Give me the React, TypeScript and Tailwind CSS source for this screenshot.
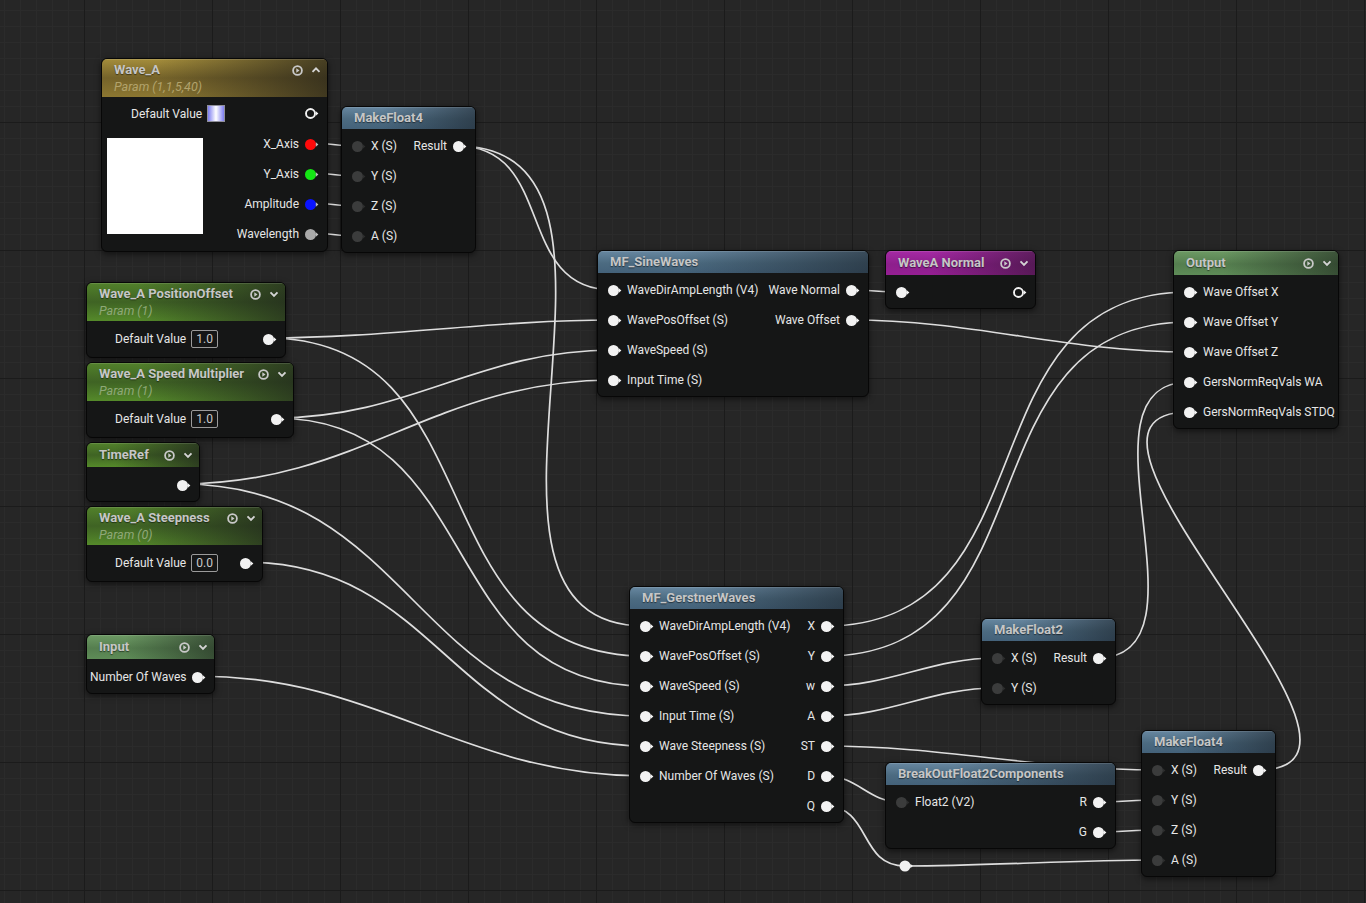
import React from "react";

type Variant = "gold" | "param" | "func" | "purple" | "output";

const headerBg: Record<Variant, string> = {
  gold: "bg-[linear-gradient(to_right,transparent_25%,rgba(32,30,24,0.7)_100%),linear-gradient(to_bottom,#a48d3b_0%,#75632a_50%,#8c7731_100%)]",
  param:
    "bg-[linear-gradient(to_right,transparent_25%,rgba(30,34,28,0.7)_100%),linear-gradient(to_bottom,#52812b_0%,#3f6324_50%,#558a2a_100%)]",
  func: "bg-[linear-gradient(to_right,transparent_30%,rgba(28,36,44,0.6)_100%),linear-gradient(to_bottom,#6787a0_0%,#4c6b81_55%,#44627a_100%)]",
  purple:
    "bg-[linear-gradient(to_right,transparent_30%,rgba(40,20,40,0.55)_100%),linear-gradient(to_bottom,#a62aa5_0%,#8d1f8c_55%,#951f93_100%)]",
  output:
    "bg-[linear-gradient(to_right,transparent_30%,rgba(30,38,30,0.6)_100%),linear-gradient(to_bottom,#6d9a64_0%,#557e4f_55%,#5e8c57_100%)]",
};

const subColor: Record<Variant, string> = {
  gold: "text-[#b2a36c]",
  param: "text-[#8fa878]",
  func: "text-[#9ab0c0]",
  purple: "text-[#d09ad0]",
  output: "text-[#a9c0a4]",
};

// pin glyph: circle + little arrow nub
const Pin = ({
  color = "#f2f2f2",
  arrow = "#f2f2f2",
  ring = false,
}: {
  color?: string;
  arrow?: string;
  ring?: boolean;
}) => (
  <svg width="15" height="11" viewBox="0 0 15 11" className="shrink-0">
    {ring ? (
      <circle cx="5.5" cy="5.5" r="4.5" fill="none" stroke={color} strokeWidth="1.9" />
    ) : (
      <circle cx="5.5" cy="5.5" r="5.5" fill={color} />
    )}
    <path d="M10.8 3.2 L13.4 5.5 L10.8 7.8 Z" fill={arrow} />
  </svg>
);

const DarkPin = () => <Pin color="#3b3c3c" arrow="#2c2d2d" />;

const HeaderIcons = ({ up = false }: { up?: boolean }) => (
  <div className="flex items-center gap-[8px]">
    <svg width="11" height="11" viewBox="0 0 11 11">
      <circle cx="5.5" cy="5.5" r="4.4" fill="none" stroke="#c9c9c9" strokeWidth="1.8" />
      <path d="M4.3 3.3 L7.5 5.5 L4.3 7.7 Z" fill="#c9c9c9" />
    </svg>
    <svg width="10" height="10" viewBox="0 0 10 10">
      <path
        d={up ? "M1.5 6.8 L5 3.3 L8.5 6.8" : "M1.5 3.4 L5 6.9 L8.5 3.4"}
        fill="none"
        stroke="#d4d4d4"
        strokeWidth="1.9"
      />
    </svg>
  </div>
);

type NodeProps = {
  className: string;
  variant: Variant;
  title: string;
  sub?: string;
  icons?: "up" | "down";
  head?: string;
  bodyClass?: string;
  children: React.ReactNode;
};

const Node = ({ className, variant, title, sub, icons, head = "h-[22px]", bodyClass = "pt-[2px] pb-px", children }: NodeProps) => (
  <div
    className={`absolute overflow-hidden rounded-[6px] border border-[#070707] bg-[#151616] shadow-[0_2px_6px_rgba(0,0,0,0.55)] ${className}`}
  >
    <div className={`${headerBg[variant]} shadow-[inset_0_1px_0_rgba(255,255,255,0.12)]`}>
      <div className={`flex ${head} items-center justify-between pl-3 pr-[6px]`}>
        <span className="text-[13px] font-bold text-[#c6c6c6] [text-shadow:0_1px_1px_rgba(0,0,0,0.5)]">{title}</span>
        {icons && <HeaderIcons up={icons === "up"} />}
      </div>
      {sub && (
        <div className={`-mt-[2px] pb-[2px] pl-3 text-[12.5px] italic leading-[16px] ${subColor[variant]}`}>{sub}</div>
      )}
    </div>
    <div className={bodyClass}>{children}</div>
  </div>
);

const In = ({ label, dark = false }: { label: string; dark?: boolean }) => (
  <div className="flex items-center pl-[10px]">
    {dark ? <DarkPin /> : <Pin />}
    <span className="ml-[4px] whitespace-nowrap">{label}</span>
  </div>
);

const Out = ({ label, color, arrow, ring }: { label?: string; color?: string; arrow?: string; ring?: boolean }) => (
  <div className="flex items-center pr-[7px]">
    {label && <span className="mr-[6px] whitespace-nowrap">{label}</span>}
    <Pin color={color} arrow={arrow} ring={ring} />
  </div>
);

const Row = ({ children }: { children: React.ReactNode }) => (
  <div className="flex h-[30px] items-center justify-between text-[12px] text-[#e6e6e6]">{children}</div>
);

const ValueBox = ({ v }: { v: string }) => (
  <div className="ml-[5px] flex h-[18px] w-[27px] items-center justify-center rounded-[2px] border border-[#9b9b9b] text-[12px] text-[#c9c9c9]">
    {v}
  </div>
);

const ParamRow = ({ v }: { v: string }) => (
  <div className="flex h-[30px] items-center text-[12px] text-[#e6e6e6]">
    <span className="pl-[28px]">Default Value</span>
    <ValueBox v={v} />
    <div className="flex-1" />
    <Out />
  </div>
);

// UE style spline: horizontal tangents, longer when going backwards
const wirePath = (x1: number, y1: number, x2: number, y2: number) => {
  const dx = x2 - x1;
  const dy = y2 - y1;
  const fwd = dx >= 0;
  const cx = Math.min(Math.abs(dx), fwd ? 1000 : 200);
  const cy = Math.min(Math.abs(dy), fwd ? 1000 : 200);
  const t = fwd ? cx + cy : cx * 3 + cy * 1.5;
  const o = t / 3;
  return `M${x1} ${y1} C${x1 + o} ${y1} ${x2 - o} ${y2} ${x2} ${y2}`;
};

const wires: [number, number, number, number][] = [
  [309, 143, 357, 146],
  [309, 173, 357, 176],
  [309, 203, 357, 206],
  [309, 233, 357, 236],
  [457, 146, 613, 290],
  [457, 146, 645, 626],
  [267, 338, 613, 320],
  [267, 338, 645, 656],
  [275, 418, 613, 350],
  [275, 418, 645, 686],
  [181, 484, 613, 380],
  [181, 484, 645, 716],
  [244, 562, 645, 746],
  [197, 676, 645, 776],
  [850, 290, 900, 292],
  [850, 320, 1189, 352],
  [825, 626, 1189, 292],
  [825, 656, 1189, 322],
  [825, 686, 997, 658],
  [825, 716, 997, 688],
  [825, 746, 1157, 770],
  [825, 776, 901, 802],
  [825, 806, 905, 866],
  [905, 866, 1157, 860],
  [1097, 802, 1157, 800],
  [1097, 832, 1157, 830],
  [1097, 658, 1189, 382],
  [1258, 770, 1189, 412],
];

export default function App() {
  return (
    <div className="relative h-[903px] w-[1366px] overflow-hidden bg-[#262626] font-['Roboto','Liberation_Sans',sans-serif] [background-image:linear-gradient(to_right,#1b1b1b_1px,transparent_1px),linear-gradient(to_bottom,#1b1b1b_1px,transparent_1px),linear-gradient(to_right,#2b2b2b_1px,transparent_1px),linear-gradient(to_bottom,#2b2b2b_1px,transparent_1px)] [background-size:128px_128px,128px_128px,16px_16px,16px_16px] [background-position:84px_122px,84px_122px,4px_10px,4px_10px]">
      <svg className="pointer-events-none absolute inset-0" width="1366" height="903">
        {wires.map(([a, b, c, d], i) => (
          <path key={i} d={wirePath(a, b, c, d)} fill="none" stroke="#dedede" strokeWidth="1.7" />
        ))}
        {/* reroute knot */}
        <circle cx="905" cy="866" r="5.5" fill="#f2f2f2" />
        <path d="M910.3 863.7 L912.9 866 L910.3 868.3 Z" fill="#f2f2f2" />
      </svg>

      {/* Wave_A vector param */}
      <Node
        className="left-[101px] top-[58px] w-[227px]"
        variant="gold"
        title="Wave_A"
        sub="Param (1,1,5,40)"
        icons="up"
        bodyClass="pt-px pb-[2px]"
      >
        <div className="flex h-[31px] items-center text-[12px] text-[#e6e6e6]">
          <span className="pl-[29px]">Default Value</span>
          <div className="ml-[5px] h-[17px] w-[18px] border border-[#8f8f9a] bg-[linear-gradient(to_right,#7c7cf0,#ffffff_50%,#7c7cf0)]" />
          <div className="flex-1" />
          <Out ring />
        </div>
        <div className="flex">
          <div className="ml-[5px] mt-[9px] h-[96px] w-[96px] bg-white" />
          <div className="flex flex-1 flex-col items-end">
            <Row>
              <span />
              <Out label="X_Axis" color="#ff0a0a" arrow="#bdbdbd" />
            </Row>
            <Row>
              <span />
              <Out label="Y_Axis" color="#14e614" arrow="#bdbdbd" />
            </Row>
            <Row>
              <span />
              <Out label="Amplitude" color="#0a14ff" arrow="#bdbdbd" />
            </Row>
            <Row>
              <span />
              <Out label="Wavelength" color="#a9a9a9" arrow="#bdbdbd" />
            </Row>
          </div>
        </div>
      </Node>

      <Node className="left-[341px] top-[106px] w-[135px]" variant="func" title="MakeFloat4">
        <Row>
          <In label="X (S)" dark />
          <Out label="Result" />
        </Row>
        <Row>
          <In label="Y (S)" dark />
        </Row>
        <Row>
          <In label="Z (S)" dark />
        </Row>
        <Row>
          <In label="A (S)" dark />
        </Row>
      </Node>

      <Node
        className="left-[86px] top-[282px] w-[200px]"
        variant="param"
        title="Wave_A PositionOffset"
        sub="Param (1)"
        icons="down"
        bodyClass="py-[3px]"
      >
        <ParamRow v="1.0" />
      </Node>

      <Node
        className="left-[86px] top-[362px] w-[208px]"
        variant="param"
        title="Wave_A Speed Multiplier"
        sub="Param (1)"
        icons="down"
        bodyClass="py-[3px]"
      >
        <ParamRow v="1.0" />
      </Node>

      <Node
        className="left-[86px] top-[442px] w-[114px]"
        variant="param"
        title="TimeRef"
        icons="down"
        head="h-[24px]"
        bodyClass="pt-[3px] pb-px"
      >
        <Row>
          <span />
          <Out />
        </Row>
      </Node>

      <Node
        className="left-[86px] top-[506px] w-[177px]"
        variant="param"
        title="Wave_A Steepness"
        sub="Param (0)"
        icons="down"
        bodyClass="py-[3px]"
      >
        <ParamRow v="0.0" />
      </Node>

      <Node
        className="left-[86px] top-[634px] w-[129px]"
        variant="output"
        title="Input"
        icons="down"
        head="h-[24px]"
        bodyClass="pt-[3px] pb-px"
      >
        <Row>
          <span className="pl-[3px]">Number Of Waves</span>
          <Out />
        </Row>
      </Node>

      <Node className="left-[597px] top-[250px] w-[272px]" variant="func" title="MF_SineWaves">
        <Row>
          <In label="WaveDirAmpLength (V4)" />
          <Out label="Wave Normal" />
        </Row>
        <Row>
          <In label="WavePosOffset (S)" />
          <Out label="Wave Offset" />
        </Row>
        <Row>
          <In label="WaveSpeed (S)" />
        </Row>
        <Row>
          <In label="Input Time (S)" />
        </Row>
      </Node>

      <Node
        className="left-[885px] top-[250px] w-[151px]"
        variant="purple"
        title="WaveA Normal"
        icons="down"
        head="h-[24px]"
        bodyClass="pt-[2px] pb-px"
      >
        <Row>
          <In label="" />
          <Out ring />
        </Row>
      </Node>

      <Node
        className="left-[1173px] top-[250px] w-[166px]"
        variant="output"
        title="Output"
        icons="down"
        head="h-[24px]"
        bodyClass="pt-[2px] pb-px"
      >
        <Row>
          <In label="Wave Offset X" />
        </Row>
        <Row>
          <In label="Wave Offset Y" />
        </Row>
        <Row>
          <In label="Wave Offset Z" />
        </Row>
        <Row>
          <In label="GersNormReqVals WA" />
        </Row>
        <Row>
          <In label="GersNormReqVals STDQ" />
        </Row>
      </Node>

      <Node className="left-[629px] top-[586px] w-[215px]" variant="func" title="MF_GerstnerWaves">
        <Row>
          <In label="WaveDirAmpLength (V4)" />
          <Out label="X" />
        </Row>
        <Row>
          <In label="WavePosOffset (S)" />
          <Out label="Y" />
        </Row>
        <Row>
          <In label="WaveSpeed (S)" />
          <Out label="w" />
        </Row>
        <Row>
          <In label="Input Time (S)" />
          <Out label="A" />
        </Row>
        <Row>
          <In label="Wave Steepness (S)" />
          <Out label="ST" />
        </Row>
        <Row>
          <In label="Number Of Waves (S)" />
          <Out label="D" />
        </Row>
        <Row>
          <span />
          <Out label="Q" />
        </Row>
      </Node>

      <Node className="left-[981px] top-[618px] w-[135px]" variant="func" title="MakeFloat2">
        <Row>
          <In label="X (S)" dark />
          <Out label="Result" />
        </Row>
        <Row>
          <In label="Y (S)" dark />
        </Row>
      </Node>

      <Node className="left-[885px] top-[762px] w-[231px]" variant="func" title="BreakOutFloat2Components">
        <Row>
          <In label="Float2 (V2)" dark />
          <Out label="R" />
        </Row>
        <Row>
          <span />
          <Out label="G" />
        </Row>
      </Node>

      <Node className="left-[1141px] top-[730px] w-[135px]" variant="func" title="MakeFloat4">
        <Row>
          <In label="X (S)" dark />
          <Out label="Result" />
        </Row>
        <Row>
          <In label="Y (S)" dark />
        </Row>
        <Row>
          <In label="Z (S)" dark />
        </Row>
        <Row>
          <In label="A (S)" dark />
        </Row>
      </Node>
    </div>
  );
}
